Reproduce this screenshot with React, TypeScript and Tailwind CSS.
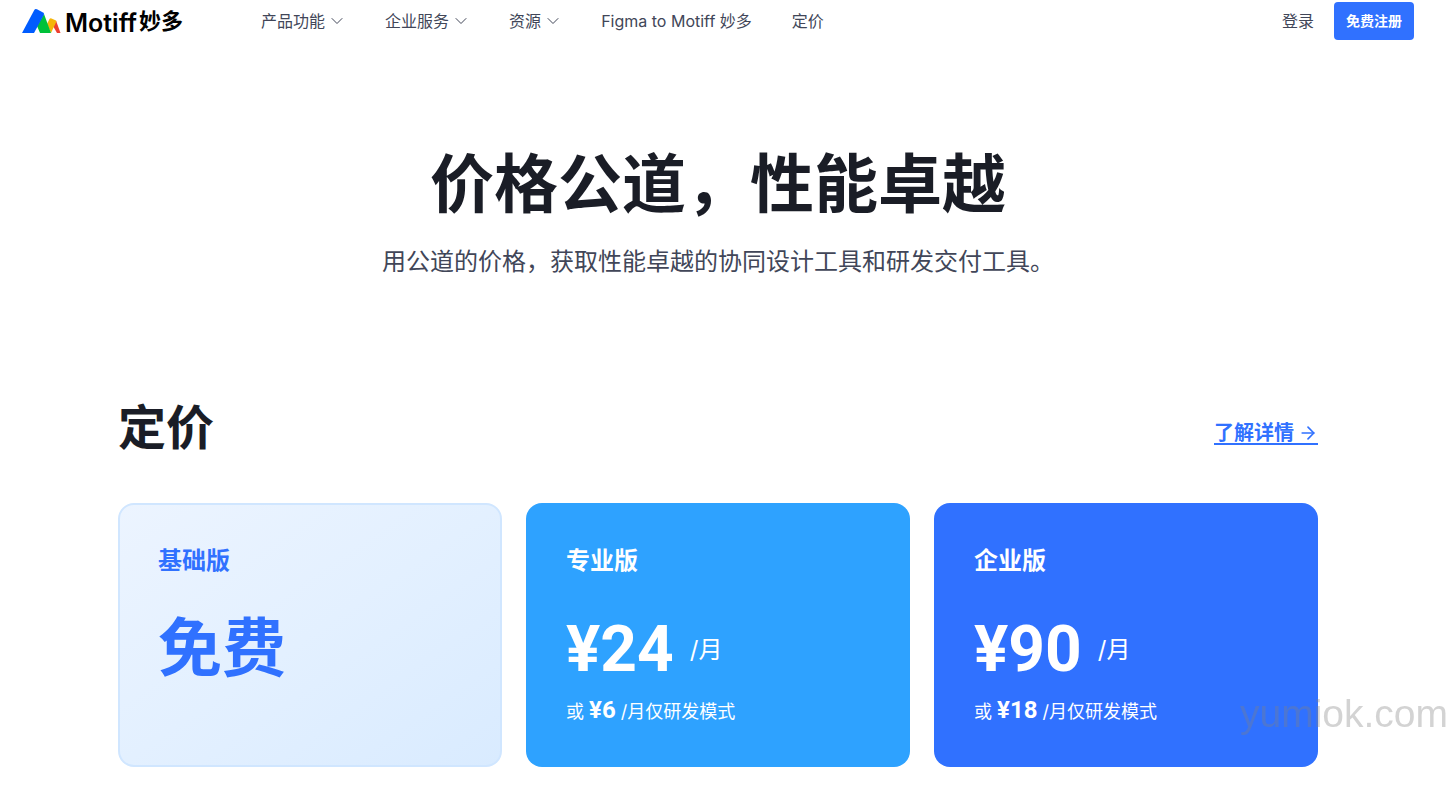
import { ArrowRight, ChevronDown } from 'lucide-react';
import clsx from 'clsx';

const navItems = [
    { label: '产品功能', hasMenu: true },
    { label: '企业服务', hasMenu: true },
    { label: '资源', hasMenu: true },
    { label: 'Figma to Motiff 妙多', hasMenu: false },
    { label: '定价', hasMenu: false },
];

const plans = [
    {
        name: '基础版',
        price: '免费',
        className: 'border-2 border-[#d0e6ff] bg-linear-to-br from-[#ecf4ff] via-[#e3f0ff] to-[#d9ebff] px-[38px] pt-[38px] text-[#3071ff]',
    },
    {
        name: '专业版',
        price: '¥24',
        devPrice: '¥6',
        className: 'bg-[#2ea2ff] px-10 pt-10 text-white',
    },
    {
        name: '企业版',
        price: '¥90',
        devPrice: '¥18',
        className: 'bg-[#3071ff] px-10 pt-10 text-white',
    },
];

function Logo() {
    return (
        <a href="#" className="flex items-center gap-1 text-black" aria-label="Motiff妙多">
            <svg className="h-[26px] w-[39px]" viewBox="0 0 39 26" aria-hidden="true">
                <path d="M34 12.500 L38.500 25 L35 25 L31 18 Z" fill="#ee3f2f" />
                <path d="M25 16 L27.500 11 Q28.200 9.800 29.500 10.400 L33.500 12.200 Q34.700 12.800 34.200 14 L29 25 Z" fill="#f5b50a" />
                <path d="M22 6 L29 25 L18.500 25 Q18 25 17.800 24.500 L15 18 Z" fill="#00c13a" />
                <path d="M0 25 L12.300 2 Q13.200 .4 15 1.300 L21 4.600 Q22.600 5.500 21.800 7 L12 25 Z" fill="#005cff" />
            </svg>
            <span className="flex items-center gap-0.5 leading-8">
                <span className="pt-1 text-[25px] font-semibold">Motiff</span>
                <span className="text-[22px] font-bold">妙多</span>
            </span>
        </a>
    );
}

function Header() {
    return (
        <header className="flex items-center px-[22px] pt-0.5 text-[#414658]">
            <Logo />
            <nav className="ml-[78px] flex items-center gap-10">
                {navItems.map((item) =>
                    item.hasMenu ? (
                        <button key={item.label} type="button" className="-mr-0.5 flex items-center gap-0.5 leading-6">
                            {item.label}
                            <ChevronDown className="size-5" strokeWidth={1.2} aria-hidden="true" />
                        </button>
                    ) : (
                        <a key={item.label} href="#" className="leading-6">
                            {item.label}
                        </a>
                    ),
                )}
            </nav>
            <div className="ml-auto flex items-center gap-5">
                <a href="#">登录</a>
                <button type="button" className="h-[38px] rounded bg-[#3071ff] px-3 text-sm font-bold text-white">
                    免费注册
                </button>
            </div>
        </header>
    );
}

function PlanCard({ plan }: { plan: (typeof plans)[number] }) {
    return (
        <article className={clsx('min-h-66 rounded-2xl pb-8', plan.className)}>
            <h3 className="text-2xl leading-9 font-bold">{plan.name}</h3>
            <div className="mt-[31px] flex items-center gap-4">
                <span className="font-['Roboto','Noto_Sans_CJK_SC',sans-serif] text-[64px] leading-20 font-bold">
                    {plan.price}
                </span>
                {plan.devPrice && <span className="text-2xl">/月</span>}
            </div>
            {plan.devPrice && (
                <p className="mt-1 text-lg leading-8">
                    或{' '}
                    <strong className="font-['Roboto'] text-2xl leading-8 font-bold">{plan.devPrice}</strong>{' '}
                    /月仅研发模式
                </p>
            )}
        </article>
    );
}

export default function App() {
    return (
        <div className="pr-3 font-['Inter','Noto_Sans_CJK_SC',sans-serif]">
            <Header />
            <main>
                <section className="pt-26 text-center">
                    <h1 className="text-[64px] leading-20 font-bold text-[#1a1d26]">价格公道，性能卓越</h1>
                    <p className="mt-5 text-2xl leading-9 text-[#414658]">
                        用公道的价格，获取性能卓越的协同设计工具和研发交付工具。
                    </p>
                </section>
                <section className="mx-auto mt-28 max-w-[1200px]">
                    <div className="flex items-center justify-between">
                        <h2 className="text-5xl leading-18 font-bold text-[#1a1d26]">定价</h2>
                        <a
                            href="#"
                            className="mt-2 flex items-center gap-1 border-b-2 border-[#3071ff] pt-1 text-xl leading-5 font-bold text-[#3071ff]"
                        >
                            了解详情
                            <ArrowRight className="size-5" aria-hidden="true" />
                        </a>
                    </div>
                    <div className="mt-[39px] grid grid-cols-3 gap-6">
                        {plans.map((plan) => (
                            <PlanCard key={plan.name} plan={plan} />
                        ))}
                    </div>
                </section>
            </main>
            <div className="pointer-events-none fixed top-[690px] right-0 font-['Liberation_Sans',sans-serif] text-[39px] leading-12 text-[#808080]/35">
                yumiok.com
            </div>
        </div>
    );
}
